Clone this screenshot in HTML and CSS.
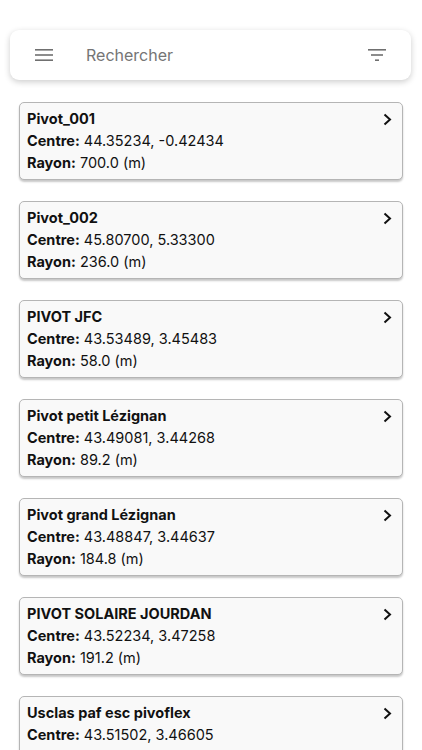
FILE: index.html
```html
<!DOCTYPE html>
<html lang="fr">
<head>
    <meta charset="UTF-8">
    <meta name="viewport" content="width=device-width, initial-scale=1.0">
    <title>Pivots</title>
    <link rel="stylesheet" href="styles.css">
</head>
<body>
    <div class="search-bar">
        <svg class="icon-menu" width="18" height="12" viewBox="0 0 18 12">
            <rect x="0" y="0" width="18" height="1.6" fill="#707070"/>
            <rect x="0" y="5.2" width="18" height="1.6" fill="#707070"/>
            <rect x="0" y="10.4" width="18" height="1.6" fill="#707070"/>
        </svg>
        <span class="search-placeholder">Rechercher</span>
        <svg class="icon-filter" width="18" height="12" viewBox="0 0 18 12">
            <rect x="0" y="0" width="18" height="1.6" fill="#707070"/>
            <rect x="3" y="5.2" width="12" height="1.6" fill="#707070"/>
            <rect x="7" y="10.4" width="4" height="1.6" fill="#707070"/>
        </svg>
    </div>

    <div class="pivot-list">
        <div class="pivot-card">
            <div class="pivot-title">Pivot_001</div>
            <div><b>Centre:</b> 44.35234, -0.42434</div>
            <div><b>Rayon:</b> 700.0 (m)</div>
            <svg class="chevron" width="9" height="13" viewBox="0 0 9 13"><path d="M1.5 1.5 L7 6.5 L1.5 11.5" fill="none" stroke="#111" stroke-width="2"/></svg>
        </div>
        <div class="pivot-card">
            <div class="pivot-title">Pivot_002</div>
            <div><b>Centre:</b> 45.80700, 5.33300</div>
            <div><b>Rayon:</b> 236.0 (m)</div>
            <svg class="chevron" width="9" height="13" viewBox="0 0 9 13"><path d="M1.5 1.5 L7 6.5 L1.5 11.5" fill="none" stroke="#111" stroke-width="2"/></svg>
        </div>
        <div class="pivot-card">
            <div class="pivot-title">PIVOT JFC</div>
            <div><b>Centre:</b> 43.53489, 3.45483</div>
            <div><b>Rayon:</b> 58.0 (m)</div>
            <svg class="chevron" width="9" height="13" viewBox="0 0 9 13"><path d="M1.5 1.5 L7 6.5 L1.5 11.5" fill="none" stroke="#111" stroke-width="2"/></svg>
        </div>
        <div class="pivot-card">
            <div class="pivot-title">Pivot petit Lézignan</div>
            <div><b>Centre:</b> 43.49081, 3.44268</div>
            <div><b>Rayon:</b> 89.2 (m)</div>
            <svg class="chevron" width="9" height="13" viewBox="0 0 9 13"><path d="M1.5 1.5 L7 6.5 L1.5 11.5" fill="none" stroke="#111" stroke-width="2"/></svg>
        </div>
        <div class="pivot-card">
            <div class="pivot-title">Pivot grand Lézignan</div>
            <div><b>Centre:</b> 43.48847, 3.44637</div>
            <div><b>Rayon:</b> 184.8 (m)</div>
            <svg class="chevron" width="9" height="13" viewBox="0 0 9 13"><path d="M1.5 1.5 L7 6.5 L1.5 11.5" fill="none" stroke="#111" stroke-width="2"/></svg>
        </div>
        <div class="pivot-card">
            <div class="pivot-title">PIVOT SOLAIRE JOURDAN</div>
            <div><b>Centre:</b> 43.52234, 3.47258</div>
            <div><b>Rayon:</b> 191.2 (m)</div>
            <svg class="chevron" width="9" height="13" viewBox="0 0 9 13"><path d="M1.5 1.5 L7 6.5 L1.5 11.5" fill="none" stroke="#111" stroke-width="2"/></svg>
        </div>
        <div class="pivot-card">
            <div class="pivot-title">Usclas paf esc pivoflex</div>
            <div><b>Centre:</b> 43.51502, 3.46605</div>
            <div><b>Rayon:</b> 120.0 (m)</div>
            <svg class="chevron" width="9" height="13" viewBox="0 0 9 13"><path d="M1.5 1.5 L7 6.5 L1.5 11.5" fill="none" stroke="#111" stroke-width="2"/></svg>
        </div>
    </div>
</body>
</html>
```

FILE: styles.css
```css
* {
    margin: 0;
    padding: 0;
    box-sizing: border-box;
}

body {
    font-family: Inter, "Liberation Sans", sans-serif;
    background: #ffffff;
    color: #111111;
    overflow: hidden;
    height: 750px;
}

.search-bar {
    display: flex;
    align-items: center;
    height: 50px;
    margin: 30px 11px 0 10px;
    padding: 0 25px 0 25px;
    background: #ffffff;
    border-radius: 9px;
    box-shadow: 0 2px 6px rgba(0, 0, 0, 0.2);
}

.icon-menu {
    flex-shrink: 0;
}

.search-placeholder {
    flex: 1;
    margin-left: 33px;
    font-size: 16px;
    color: #757575;
}

.icon-filter {
    flex-shrink: 0;
}

.pivot-list {
    display: flex;
    flex-direction: column;
    gap: 21px;
    margin: 22px 19px 0 19px;
}

.pivot-card {
    position: relative;
    height: 78px;
    padding: 5px 7px;
    background: #f9f9f9;
    border: 1px solid #b5b5b5;
    border-radius: 5px;
    box-shadow: 0 2px 2px rgba(0, 0, 0, 0.22);
    font-size: 14.5px;
    line-height: 22px;
}

.pivot-card b,
.pivot-title {
    font-weight: 700;
}

.chevron {
    position: absolute;
    top: 10px;
    right: 10px;
}
```
